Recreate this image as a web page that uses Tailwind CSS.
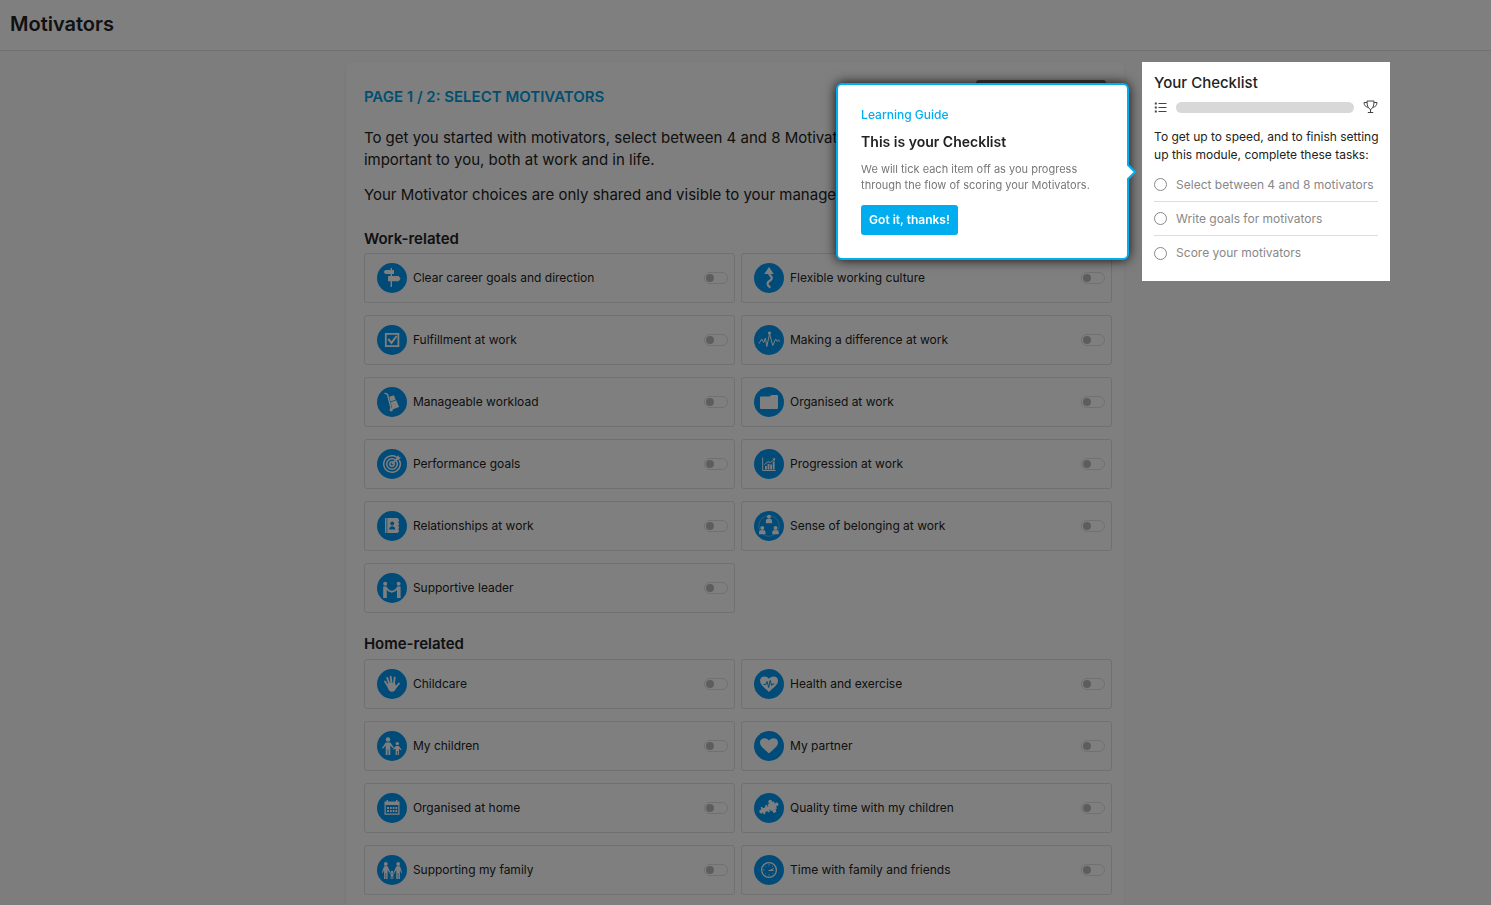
<!DOCTYPE html>
<html lang="en">

<head>
	<meta charset="UTF-8">
	<meta name="viewport" content="width=device-width, initial-scale=1.0">
	<title>Motivators</title>
	<script src="https://cdn.jsdelivr.net/npm/@tailwindcss/browser@4"></script>
</head>

<body class="bg-[#fafafa] text-[#222] font-['Inter','Liberation_Sans',sans-serif] h-screen overflow-hidden">
	<!-- icon sprite, every symbol is drawn on a 30x30 disc -->
	<svg class="hidden" xmlns="http://www.w3.org/2000/svg">
		<symbol id="signpost" viewBox="0 0 30 30">
			<path d="M13.600 5h1.400v2h2v4h-2v2h6.600l2.100 2.600-2.100 2.600H15V24h-1.400v-5.800H11V13h2.600v-2H8.400L6.600 9l1.800-2h5.200z" />
		</symbol>
		<symbol id="checkbox" viewBox="0 0 30 30">
			<path d="M8.800 8.800h12.600v12.400H8.800z" fill="none" stroke="currentColor" stroke-width="1.800" />
			<path d="M11.300 14l3.200 3.800 5.200-6.800" fill="none" stroke="currentColor" stroke-width="2" />
		</symbol>
		<symbol id="trolley" viewBox="0 0 30 30">
			<path d="M7.500 6.200l3 1.100 3.700 14.500" fill="none" stroke="currentColor" stroke-width="1.400" />
			<path d="M12.200 9.800l4.800-1.600 1.700 4.600-5.300 1.800zM13.600 15.300l5.800-2 2.500 6.800-6.500 2.300z" />
			<path d="M14 21.800l8-2.800" stroke="currentColor" stroke-width="1.200" />
			<circle cx="14.200" cy="22.800" r="1.700" />
		</symbol>
		<symbol id="bend" viewBox="0 0 30 30">
			<path d="M15 4l4.800 7h-9.600z" />
			<path d="M15 10c.2 2.500 2.800 2.800 2.800 5.200 0 2.600-4.300 2.600-4.300 5.500 0 1.800 1.200 2.600 2.900 4" fill="none" stroke="currentColor" stroke-width="2.200" />
		</symbol>
		<symbol id="pulse" viewBox="0 0 30 30">
			<path d="M5 18.500l2.800-4.500 1.900 3.500 1.700-4.500 1.400 8.500 2.700-12.500 3.300 11.500 2.800-6.500 1.800 2.500 1.200-1.500 1.600 1.500" fill="none" stroke="currentColor" stroke-width="1" />
			<circle cx="15.500" cy="8" r="1.600" />
		</symbol>
		<symbol id="folder" viewBox="0 0 30 30">
			<path d="M7 9.500h8.500L17.500 8H23a1 1 0 0 1 1 1v12a1 1 0 0 1-1 1H7a1 1 0 0 1-1-1V10.500a1 1 0 0 1 1-1z" />
		</symbol>
		<symbol id="target" viewBox="0 0 30 30">
			<g fill="none" stroke="currentColor" stroke-width="1.500">
				<path d="M19.500 8a8.300 8.300 0 1 0 2.800 3" />
				<circle cx="15" cy="15" r="5.300" />
				<circle cx="15" cy="15" r="2.200" />
				<path d="M15 15l6.500-6.500" />
			</g>
			<path d="M19 8.500L21.500 6l.4 2 2.100.4-2.500 2.500-2.200-.2z" />
		</symbol>
		<symbol id="contacts" viewBox="0 0 30 30">
			<path d="M8 7h1.500v15H8zM10.300 7h10a1 1 0 0 1 1 1v.6h.7v2h-.7v1.500h.7v2h-.7v1.500h.7v2h-.7v1.500h.7v1.600h-.7V21a1 1 0 0 1-1 1h-10z" />
			<circle cx="15.200" cy="12.500" r="1.900" fill="#0096f0" />
			<path d="M12.200 18.500c0-4.400 6-4.400 6 0z" fill="#0096f0" />
		</symbol>
		<symbol id="handshake" viewBox="0 0 30 30">
			<circle cx="8.200" cy="10.800" r="2" />
			<circle cx="21.600" cy="10.800" r="2" />
			<path d="M6.200 13.500h3.600V25H6.200zM20 13.500h3.600V25H20z" />
			<path d="M9 14.500l2.500 3 3.300 1.300 3.400-1.300 2.500-3" fill="none" stroke="currentColor" stroke-width="1.700" />
		</symbol>
		<symbol id="chart" viewBox="0 0 30 30">
			<path d="M8.700 8.500v13h13" fill="none" stroke="currentColor" stroke-width="1" />
			<path d="M11 17h1.800v3.500H11zM13.600 15h1.800v5.500h-1.800zM16.200 15.500H18v5h-1.800zM18.800 12.500h1.800v8h-1.800z" />
			<path d="M10.500 15.500l3.500-2.800 2.500.8 3.500-3" fill="none" stroke="currentColor" stroke-width="1" />
			<path d="M18.300 9.800l3-.8-.7 3z" />
		</symbol>
		<symbol id="circle-people" viewBox="0 0 30 30">
			<circle cx="15" cy="15" r="10.300" fill="none" stroke="currentColor" stroke-width=".7" opacity=".5" />
			<circle cx="15" cy="5.800" r="2" />
			<path d="M11.800 12.300c0-5 1-4.300 3.200-4.300s3.200-.7 3.200 4.300z" />
			<circle cx="8.300" cy="17" r="2" />
			<path d="M5 23.300c0-4.800 1-4.100 3.300-4.100s3.300-.7 3.300 4.100z" />
			<circle cx="21.500" cy="17" r="2" />
			<path d="M18.200 23.300c0-4.800 1-4.100 3.300-4.100s3.300-.7 3.300 4.100z" />
		</symbol>
		<symbol id="hand" viewBox="0 0 30 30">
			<g fill="none" stroke="currentColor" stroke-width="1.900" stroke-linecap="round">
				<path d="M8 12.500l4 6M10.200 9l3 8M13.700 7.800l1 8M17.700 8.500l-1 8M22 14.500l-4.500 5.500" />
			</g>
			<path d="M10 15.500l2.500-1.500h5.500l1.300 3.500c-.3 3.500-2 5.300-4.300 5.300-3 0-4-2.500-5-7.300z" />
		</symbol>
		<symbol id="parent-child" viewBox="0 0 30 30">
			<circle cx="11" cy="8.500" r="2.200" />
			<path d="M8.700 11.500h4.600l3.500 5-.9.800-2.600-2.800V24h-1.900v-5.500h-.8V24H8.700v-9.500L6 17.700l-.9-.7z" />
			<circle cx="20.300" cy="12.600" r="1.700" />
			<path d="M18.800 15h3l2.800 3.600-.8.700-1.800-1.800V24h-1.300v-4h-.8v4h-1.300v-6.500l-1.700 1.300-.8-.8z" />
		</symbol>
		<symbol id="calendar" viewBox="0 0 30 30">
			<path d="M7.500 8.500h2V7h1.500v1.500h8V7h1.500v1.500h2V12h-15z" />
			<path d="M8.100 12v9.200h13.800V12" fill="none" stroke="currentColor" stroke-width="1.200" />
			<path d="M10 14h2v2h-2zM13 14h1.700v2H13zM15.700 14h1.700v2h-1.700zM18.400 14h1.800v2h-1.800zM10 17h2v2h-2zM13 17h1.700v2H13zM15.700 17h1.700v2h-1.700zM18.400 17h1.800v2h-1.800z" />
		</symbol>
		<symbol id="family" viewBox="0 0 30 30">
			<circle cx="8.800" cy="9" r="1.900" />
			<path d="M7 11.300h3.700l2.300 5.500-.9.500-1.500-2.300V24H9.200v-6h-.6v6H7.100v-9l-1.300 3-.9-.4z" />
			<circle cx="21.200" cy="9" r="1.900" />
			<path d="M19.300 11.300H23l2.100 6.300-.9.400-1.300-3v9h-1.500v-6h-.6v6h-1.500v-9l-1.500 2.300-.9-.5z" />
			<circle cx="15" cy="17" r="1.300" />
			<path d="M12.500 16.600l1.500 1.800h2l1.500-1.800.6.500-1.800 2.500V24h-.9v-2.800h-.8V24h-.9v-4.400l-1.800-2.500z" />
		</symbol>
		<symbol id="heart" viewBox="0 0 30 30">
			<path d="M15 22.500C11 18.500 6 15.700 6 11.500c0-4.500 6-5.800 9-2 3-3.800 9-2.500 9 2 0 4.200-5 7-9 11z" />
		</symbol>
		<symbol id="heart-pulse" viewBox="0 0 30 30">
			<path d="M15 23C11 19 6 16 6 11.800c0-4.800 6-5.500 9-2 3-3.500 9-2.800 9 2C24 16 19 19 15 23z" />
			<path d="M9.500 15.500h2.300l1.200-3 1.700 6 1.500-7 1.500 5 .8-1.500h2" fill="none" stroke="#0096f0" stroke-width="1" />
		</symbol>
		<symbol id="puzzle" viewBox="0 0 30 30">
			<g transform="rotate(-25 15 15)">
				<path d="M7.500 11h6.800v7.800H7.500zM15.300 11h6.800v7.800h-6.800z" />
				<circle cx="10.900" cy="18.600" r="1.600" fill="#0096f0" />
				<circle cx="10.900" cy="11.200" r="1.600" fill="#0096f0" />
				<circle cx="6.400" cy="14.900" r="1.900" />
				<circle cx="14.800" cy="14.900" r="1.900" />
				<circle cx="23.400" cy="14.900" r="1.900" />
				<circle cx="18.700" cy="9.900" r="1.900" />
				<circle cx="18.700" cy="19.900" r="1.900" />
			</g>
		</symbol>
		<symbol id="clock" viewBox="0 0 30 30">
			<circle cx="15" cy="15" r="7.400" fill="none" stroke="currentColor" stroke-width="1.300" />
			<path d="M15 15.800l4.800-2.200M14.500 15.500h5" fill="none" stroke="currentColor" stroke-width="1" />
			<path d="M15 9.200v1.500M15 19.300v1.500M9.200 15h1.500M11 11l.7.700M11 19l.7-.7M19 11l-.7.700M19 19l-.7-.7" stroke="currentColor" stroke-width=".8" />
		</symbol>
	</svg>

	<header class="h-[51px] bg-white border-b border-[#e2e2e2] px-[10px] flex items-center">
		<h1 class="text-[20px] leading-6 font-semibold pb-[2px]">Motivators</h1>
	</header>

	<div class="grid grid-cols-[4fr_9fr_4fr] pr-[21px] pt-[11px] items-start">
		<main class="col-start-2 bg-white rounded-md shadow-[0_0_2px_rgba(0,0,0,0.08)] pl-[18px] pr-3 pt-[18px] pb-10">
			<div class="flex justify-between pr-[6px]">
				<h2 class="text-[15px] leading-[34px] font-semibold text-[#009fe3] uppercase">Page 1 / 2: Select Motivators</h2>
				<button type="button" aria-label="Next page" class="w-[130px] h-[34px] rounded-[3px] bg-[#777]"></button>
			</div>
			<p class="mt-[13px] text-[15px] leading-[22px]">To get you started with motivators, select between 4 and 8 Motivators that are<br>important to you, both at work and in life.</p>
			<p class="mt-[13px] text-[15px] leading-[22px]">Your Motivator choices are only shared and visible to your manager, to support you.</p>

			<h3 class="mt-[23px] text-[15px] leading-[20px] font-semibold">Work-related</h3>
			<div id="work" class="mt-1 grid grid-cols-2 gap-x-[6px] gap-y-3"></div>

			<h3 class="mt-[21px] text-[15px] leading-[20px] font-semibold">Home-related</h3>
			<div id="home" class="mt-[5px] grid grid-cols-2 gap-x-[6px] gap-y-3"></div>
		</main>

		<aside class="relative z-20 ml-[18px] w-[248px] bg-white px-3 pt-3 pb-[11px]">
			<h2 class="text-[15px] leading-[18px] font-medium">Your Checklist</h2>
			<div class="mt-2 flex items-center">
				<svg class="w-[14px] h-[14px]" viewBox="0 0 14 14" fill="none" stroke="#444">
					<path d="M4.500 2.500h8M4.500 6.500h8M4.500 10.500h8" />
					<path d="M.8 2.500h2M.8 6.500h2M.8 10.500h2" stroke-width="2" />
				</svg>
				<div class="ml-2 h-[11px] grow rounded-full bg-[#d8d8d8]"></div>
				<svg class="ml-[9px] w-[15px] h-[15px]" viewBox="0 0 15 15" fill="none" stroke="#444">
					<path d="M4 1h7c0 4.500-1 7.500-3.500 8.500C5 8.500 4 5.500 4 1zM4 2.500H1c0 2.500 1.500 4.500 4 4.800M11 2.500h3c0 2.500-1.500 4.500-4 4.800M7.500 9.500v3M4.800 12.500h5.400" />
				</svg>
			</div>
			<p class="mt-[13px] -mr-2 text-[12px] leading-[18px]">To get up to speed, and to finish setting up this module, complete these tasks:</p>
			<ul class="mt-1 text-[12px] text-[#888] divide-y divide-[#ddd]">
				<li class="h-[34px] flex items-center gap-[9px]"><span class="w-[13px] h-[13px] rounded-full border border-[#888]"></span>Select between 4 and 8 motivators</li>
				<li class="h-[34px] flex items-center gap-[9px]"><span class="w-[13px] h-[13px] rounded-full border border-[#888]"></span>Write goals for motivators</li>
				<li class="h-[34px] flex items-center gap-[9px]"><span class="w-[13px] h-[13px] rounded-full border border-[#888]"></span>Score your motivators</li>
			</ul>

			<!-- guide popup -->
			<div role="dialog" aria-labelledby="guide-title" class="absolute right-full top-[21px] mr-[13px] w-[293px] bg-white border-2 border-[#00aeef] rounded-md shadow-[0_0_12px_rgba(0,0,0,0.9)] px-[23px] pt-[22px] pb-[23px]">
				<p class="text-[12px] leading-4 font-medium text-[#00aeef]">Learning Guide</p>
				<h2 id="guide-title" class="mt-[9px] text-[14px] leading-5 font-semibold">This is your Checklist</h2>
				<p class="mt-[9px] text-[11px] leading-4 text-[#777]">We will tick each item off as you progress through the flow of scoring your Motivators.</p>
				<button type="button" class="mt-3 block h-[30px] px-2 rounded-[3px] bg-[#00aeef] text-white text-[12px] font-semibold">Got it, thanks!</button>
				<svg class="absolute left-full top-[78px] w-[9px] h-[18px]" viewBox="0 0 9 18">
					<path d="M0 1v16l8-8z" fill="#fff" />
					<path d="M0 1l8 8-8 8" fill="none" stroke="#00aeef" stroke-width="2" />
				</svg>
			</div>
		</aside>
	</div>

	<div class="fixed inset-0 z-10 bg-black/50"></div>

	<script>
		const work = [
			['signpost', 'Clear career goals and direction'],
			['bend', 'Flexible working culture'],
			['checkbox', 'Fulfillment at work'],
			['pulse', 'Making a difference at work'],
			['trolley', 'Manageable workload'],
			['folder', 'Organised at work'],
			['target', 'Performance goals'],
			['chart', 'Progression at work'],
			['contacts', 'Relationships at work'],
			['circle-people', 'Sense of belonging at work'],
			['handshake', 'Supportive leader'],
		];
		const home = [
			['hand', 'Childcare'],
			['heart-pulse', 'Health and exercise'],
			['parent-child', 'My children'],
			['heart', 'My partner'],
			['calendar', 'Organised at home'],
			['puzzle', 'Quality time with my children'],
			['family', 'Supporting my family'],
			['clock', 'Time with family and friends'],
		];

		const row = ([icon, name]) => `
			<label class="h-[50px] pl-3 pr-[6px] flex items-center gap-[6px] border border-[#e0e0e0] rounded-[3px] text-[12px] cursor-pointer">
				<svg class="w-[30px] h-[30px] rounded-full bg-[#0096f0] text-white fill-current"><use href="#${icon}" /></svg>
				<span class="grow">${name}</span>
				<input type="checkbox" role="switch" name="${icon}" class="appearance-none w-6 h-3 rounded-full border border-[#e0e0e0] flex items-center px-px before:w-2 before:h-2 before:rounded-full before:bg-[#bbb] checked:before:ml-3 checked:before:bg-[#0096f0]">
			</label>`;

		document.getElementById('work').innerHTML = work.map(row).join('');
		document.getElementById('home').innerHTML = home.map(row).join('');
	</script>
</body>

</html>
